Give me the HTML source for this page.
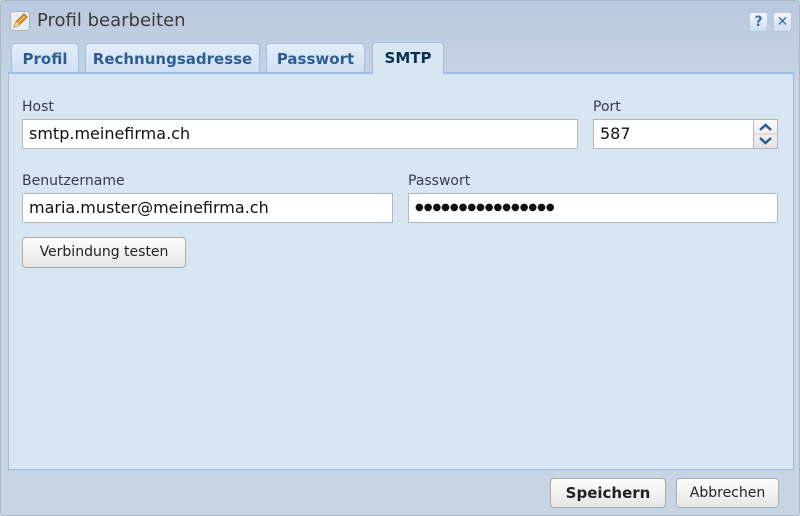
<!DOCTYPE html>
<html><head><meta charset="utf-8"><style>
*{box-sizing:border-box;margin:0;padding:0}
body{width:800px;height:516px;background:#c6d4e4;font-family:"DejaVu Sans","Liberation Sans",sans-serif;position:relative;overflow:hidden}
.dlg{position:absolute;left:0;top:0;width:800px;height:516px;border:1px solid #aab8c8;border-radius:5px;background:linear-gradient(#b9c9dd,#c6d4e3 80px,#c6d4e3)}
.title{position:absolute;left:36px;top:9px;font-size:18px;color:#3a3a3a}
.ico{position:absolute;left:9px;top:10px;width:20px;height:20px;border:1px solid #a8b4c2;border-radius:3px;background:#e8edf3}
.tb{position:absolute;top:11px;width:19px;height:20px;border:1px solid #b7c8dc;border-radius:3px;background:linear-gradient(#f2f7fd,#cfdff0);color:#3b6fb0;font-weight:bold;font-size:14px;text-align:center;line-height:18px}
.tab{position:absolute;top:42px;height:30px;border:1px solid #9dbfe6;border-bottom:none;border-radius:4px 4px 0 0;background:linear-gradient(#e4eefa,#cfdff2);color:#2c5d93;font-weight:bold;font-size:15px;text-align:center;line-height:30px}
.tab.act{background:#d8e6f4;color:#0f2f4f;top:41px;height:32px;z-index:2}
.panel{position:absolute;left:7px;top:71px;width:786px;height:398px;border:1px solid #9dbfe6;border-top:2px solid #9dbfe6;background:#d8e6f4}
.lbl{position:absolute;font-size:14px;color:#363a55}
.inp{position:absolute;height:30px;border:1px solid #b2b8c0;background:#fff;font-size:16px;color:#111;padding-left:6px;line-height:28px}
.btn{position:absolute;border:1px solid #a8adb4;border-radius:4px;background:linear-gradient(#fdfdfd,#e6e6e6);font-size:14px;color:#222;text-align:center}
</style></head><body>
<div class="dlg">
<div class="ico"><svg width="18" height="18" viewBox="0 0 18 18"><path d="M3 15 L5 10 L13 2 L16 5 L8 13 Z" fill="#f0b040" stroke="#b06010" stroke-width="1"/><path d="M3 15 L5 10 L8 13Z" fill="#f5d9a0"/></svg></div>
<div class="title">Profil bearbeiten</div>
<div class="tb" style="left:748px">?</div>
<div class="tb" style="left:772px">✕</div>
<div class="tab" style="left:10px;width:68px">Profil</div>
<div class="tab" style="left:84px;width:175px">Rechnungsadresse</div>
<div class="tab" style="left:265px;width:99px">Passwort</div>
<div class="tab act" style="left:371px;width:72px">SMTP</div>
<div class="panel"></div>
<div class="lbl" style="left:21px;top:98px">Host</div>
<div class="inp" style="left:21px;top:118px;width:556px">smtp.meinefirma.ch</div>
<div class="lbl" style="left:592px;top:98px">Port</div>
<div class="inp" style="left:592px;top:118px;width:161px">587</div>
<div style="position:absolute;left:752px;top:118px;width:25px;height:30px;border:1px solid #b2b8c0;background:linear-gradient(#fafafa,#e4e4e4)"><svg width="23" height="28" viewBox="0 0 23 28"><path d="M6 10 L11.5 5 L17 10" fill="none" stroke="#2c5d93" stroke-width="2.5"/><path d="M6 18 L11.5 23 L17 18" fill="none" stroke="#2c5d93" stroke-width="2.5"/><line x1="0" y1="14" x2="23" y2="14" stroke="#ccc"/></svg></div>
<div class="lbl" style="left:21px;top:172px">Benutzername</div>
<div class="inp" style="left:21px;top:192px;width:371px">maria.muster@meinefirma.ch</div>
<div class="lbl" style="left:407px;top:172px">Passwort</div>
<div class="inp" style="left:407px;top:192px;width:370px;font-size:10px;letter-spacing:0px">●●●●●●●●●●●●●●●●</div>
<div class="btn" style="left:21px;top:236px;width:164px;height:31px;line-height:29px">Verbindung testen</div>
<div class="btn" style="left:549px;top:477px;width:116px;height:30px;line-height:28px;font-weight:bold;font-size:15px">Speichern</div>
<div class="btn" style="left:675px;top:477px;width:103px;height:30px;line-height:28px">Abbrechen</div>
</div>
</body></html>
